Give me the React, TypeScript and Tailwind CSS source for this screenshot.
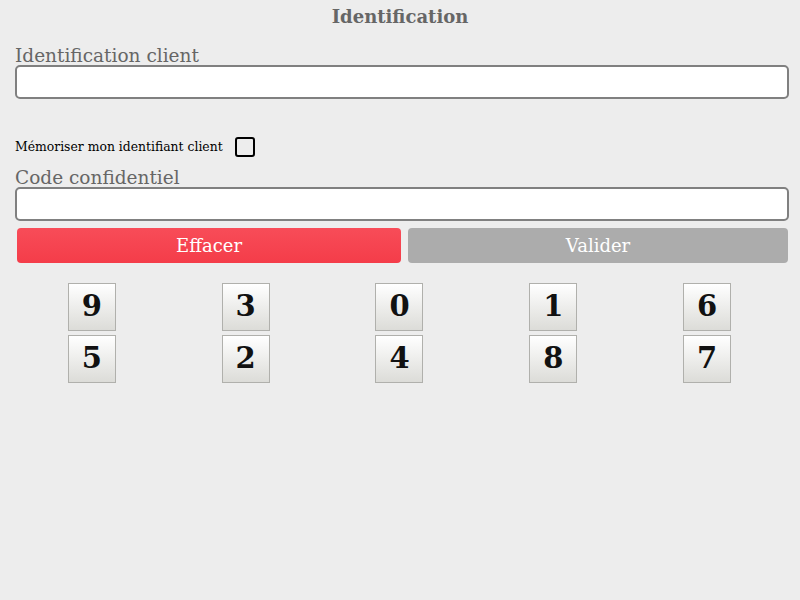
import React, { useState } from 'react';

const keys = ['9', '3', '0', '1', '6', '5', '2', '4', '8', '7'];

const App: React.FC = () => {
  const [client, setClient] = useState('');
  const [code, setCode] = useState('');
  const [remember, setRemember] = useState(false);

  return (
    <div className="min-h-screen w-[800px] bg-[#ededed] font-['DejaVu_Serif',serif] text-[#666]">
      <h1 className="pt-[6px] text-center text-[18px] font-bold leading-[22px]">Identification</h1>

      <div className="mt-[19px] pl-[15px] pr-[11px]">
        <label className="block text-[18.5px] leading-[18px]">Identification client</label>
        <input
          value={client}
          onChange={(e) => setClient(e.target.value)}
          className="block h-[34px] w-full rounded-[5px] border-2 border-[#808080] bg-white px-2 outline-none"
        />

        <div className="mt-[38px] flex items-center gap-[12px] text-[12.4px] text-black">
          <span>Mémoriser mon identifiant client</span>
          <button
            onClick={() => setRemember(!remember)}
            className="h-[20px] w-[20px] rounded-[3px] border-2 border-black bg-transparent"
          >
            {remember ? '✓' : ''}
          </button>
        </div>

        <label className="mt-[12px] block text-[18.5px] leading-[18px]">Code confidentiel</label>
        <input
          value={code}
          onChange={(e) => setCode(e.target.value)}
          type="password"
          className="block h-[34px] w-full rounded-[5px] border-2 border-[#808080] bg-white px-2 outline-none"
        />
      </div>

      <div className="mt-[7px] flex gap-[7px] pl-[17px]">
        <button
          onClick={() => setCode('')}
          className="h-[35px] w-[384px] rounded-[4px] bg-gradient-to-b from-[#f84c58] to-[#f43c49] text-[18px] text-white"
        >
          Effacer
        </button>
        <button className="h-[35px] w-[380px] rounded-[4px] bg-[#acacac] text-[18px] text-white">Valider</button>
      </div>

      <div className="ml-[15px] mr-[16px] mt-[20px] grid grid-cols-5 gap-y-[4px]">
        {keys.map((k) => (
          <div key={k} className="flex justify-center">
            <button
              onClick={() => setCode(code + k)}
              className="flex h-[48px] w-[48px] items-center justify-center border border-[#b0b0ac] bg-gradient-to-b from-white to-[#dcdcd8] text-[29px] font-bold text-[#111]"
            >
              {k}
            </button>
          </div>
        ))}
      </div>
    </div>
  );
};

export default App;
